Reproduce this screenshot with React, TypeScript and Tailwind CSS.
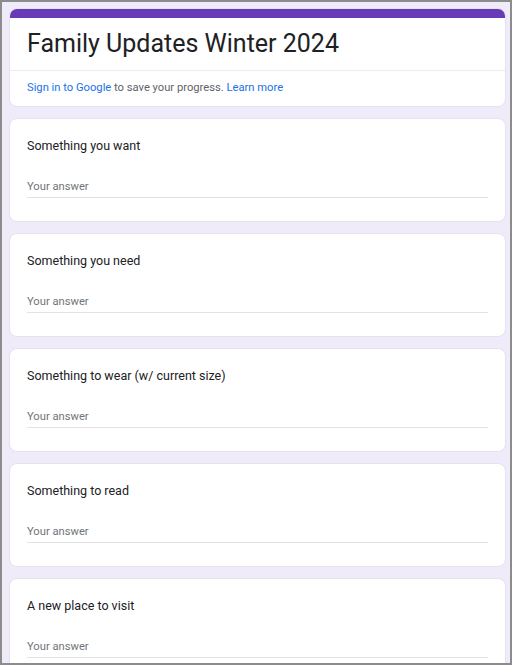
import React from 'react';

const questions = [
  'Something you want',
  'Something you need',
  'Something to wear (w/ current size)',
  'Something to read',
  'A new place to visit',
];

const QuestionCard: React.FC<{ title: string }> = ({ title }) => (
  <div className="h-[104px] shrink-0 rounded-lg border border-[#e6e1ee] bg-white px-[17px] pt-[18px]">
    <div className="text-[12.5px] leading-[17px] text-[#202124]">{title}</div>
    <div className="mt-[25px] border-b border-[#e2e2e2] pb-[3px] text-[11.2px] leading-[15px] text-[#70757a]">
      Your answer
    </div>
  </div>
);

export default function App() {
  return (
    <div
      className="h-[666px] w-[514px] overflow-hidden bg-white"
      style={{ fontFamily: 'Roboto, "Noto Sans", Arial, sans-serif' }}
    >
      <div className="h-[665px] w-[512px] overflow-hidden border-2 border-[#8c8c8c] bg-[#f0ebf8] pl-[7px] pr-[4px] pt-[6px]">
        <div className="flex flex-col gap-[11px]">
          <div className="h-[99px] shrink-0 overflow-hidden rounded-lg border border-[#e6e1ee] bg-white">
            <div className="h-[9px] bg-[#673ab7]" />
            <div className="px-[17px] pt-[11px] pb-[11px] text-[25px] leading-[30px] text-[#202124]">
              Family Updates Winter 2024
            </div>
            <div className="border-t border-[#ececec] px-[17px] pt-[9px] text-[11.2px] leading-[16px] text-[#5f6368]">
              <span className="text-[#1a73e8]">Sign in to Google</span> to save your progress.{' '}
              <span className="text-[#1a73e8]">Learn more</span>
            </div>
          </div>
          {questions.map((q) => (
            <QuestionCard key={q} title={q} />
          ))}
        </div>
      </div>
    </div>
  );
}
